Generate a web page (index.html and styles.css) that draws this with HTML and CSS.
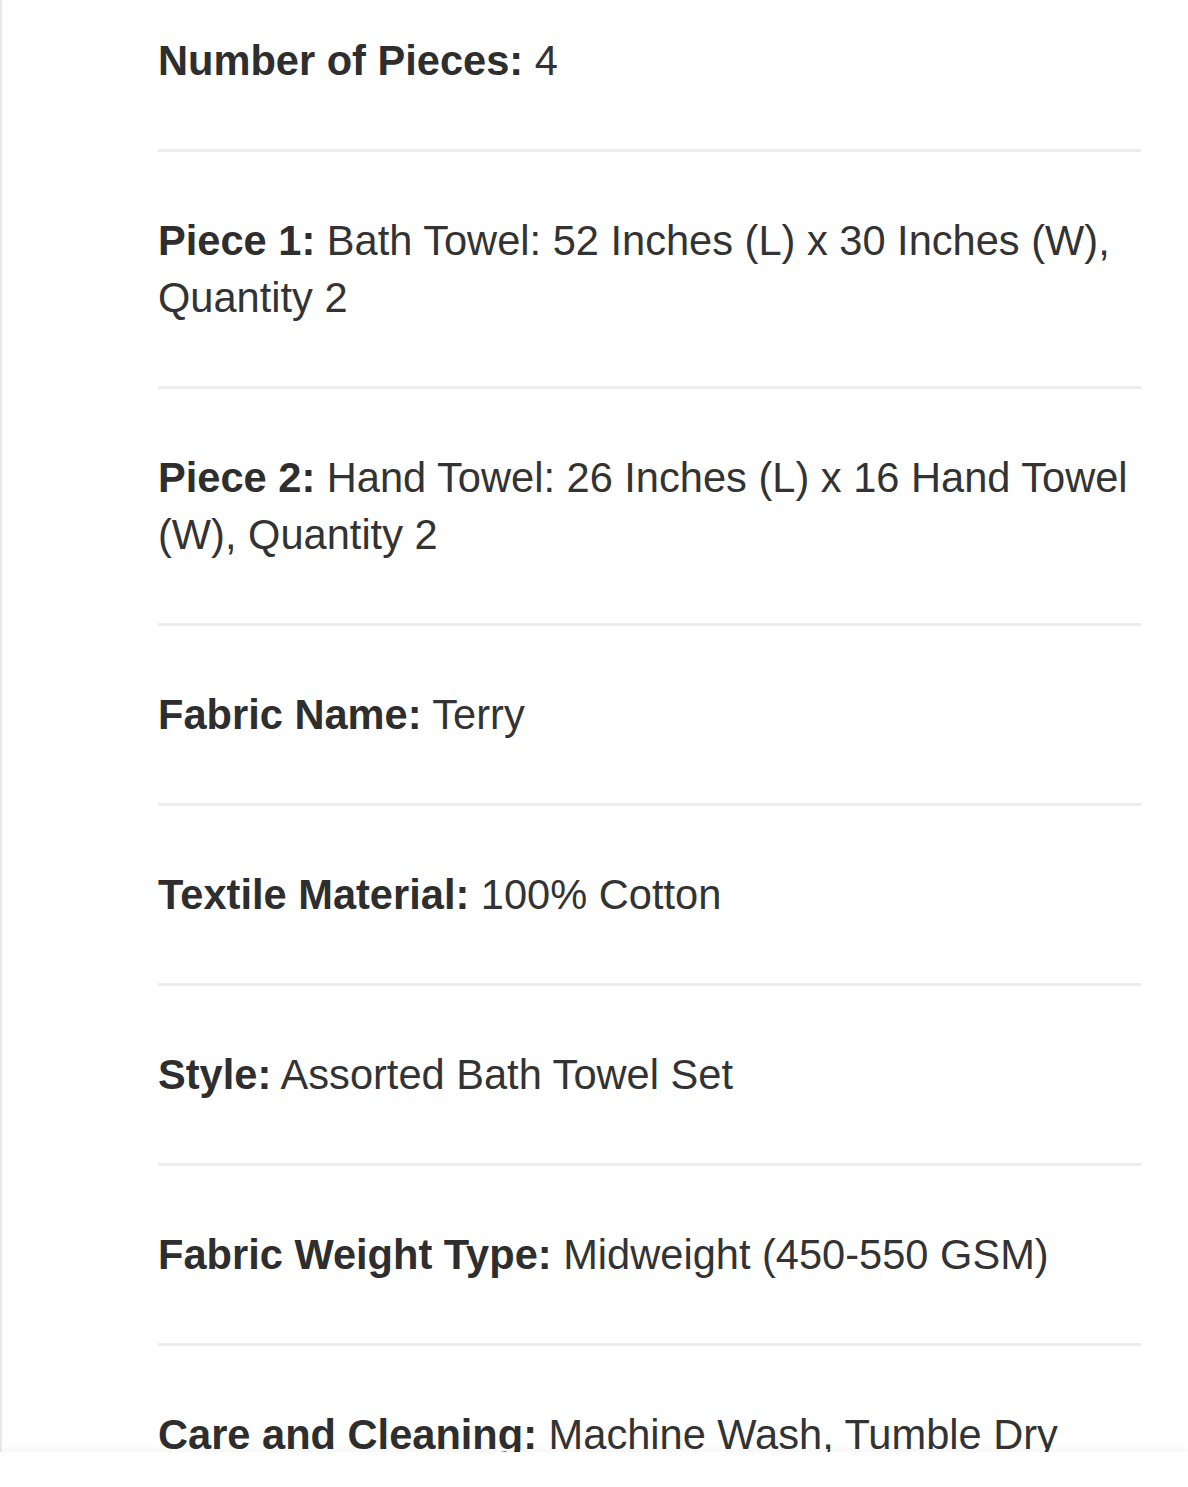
FILE: index.html
```html
<!DOCTYPE html>
<html lang="en">
<head>
<meta charset="utf-8">
<title>Product details</title>
<link rel="stylesheet" href="styles.css">
</head>
<body>
<div class="page">
  <ul class="specs">
    <li class="spec"><b>Number of Pieces:</b> 4</li>
    <li class="spec"><b>Piece 1:</b> Bath Towel: 52 Inches (L) x 30 Inches (W), Quantity 2</li>
    <li class="spec"><b>Piece 2:</b> Hand Towel: 26 Inches (L) x 16 Hand Towel (W), Quantity 2</li>
    <li class="spec"><b>Fabric Name:</b> Terry</li>
    <li class="spec"><b>Textile Material:</b> 100% Cotton</li>
    <li class="spec"><b>Style:</b> Assorted Bath Towel Set</li>
    <li class="spec"><b>Fabric Weight Type:</b> Midweight (450-550 GSM)</li>
    <li class="spec"><b>Care and Cleaning:</b> Machine Wash, Tumble Dry</li>
  </ul>
</div>
<div class="bottom-bar"></div>
</body>
</html>
```
FILE: styles.css
```css
html, body {
  margin: 0;
  padding: 0;
  background: #ffffff;
}

body {
  font-family: "Liberation Sans", Arial, Helvetica, sans-serif;
  color: #333333;
  overflow: hidden;
  height: 1487px;
}

.page {
  border-left: 2px solid #e8e8e8;
  padding-left: 156px;
  padding-right: 47px;
  min-height: 1487px;
}

.specs {
  list-style: none;
  margin: -28px 0 0 0;
  padding: 0;
}

.spec {
  font-size: 41.6px;
  line-height: 57px;
  padding: 60px 0;
  border-bottom: 3px solid #ececec;
}

.spec b {
  font-weight: 700;
  color: #2e2e2e;
}

.bottom-bar {
  position: fixed;
  left: 0;
  right: 0;
  bottom: 0;
  height: 35px;
  background: #ffffff;
  box-shadow: 0 -4px 6px rgba(0, 0, 0, 0.035);
}
```
